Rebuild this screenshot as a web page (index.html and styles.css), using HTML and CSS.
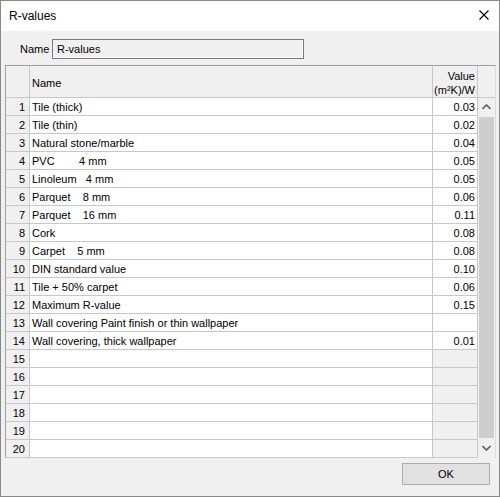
FILE: index.html
```html
<!DOCTYPE html>
<html>
<head>
<meta charset="utf-8">
<link rel="stylesheet" href="styles.css">
</head>
<body>
<div class="window">
  <div class="titlebar">
    <span class="title">R-values</span>
    <svg class="close" width="10" height="10" viewBox="0 0 10 10"><path d="M0.5 0.5 L9.5 9.5 M9.5 0.5 L0.5 9.5" stroke="#000" stroke-width="1.1" fill="none"/></svg>
  </div>
  <div class="content">
    <div class="name-row">
      <span class="label">Name</span>
      <div class="textbox">R-values</div>
    </div>
    <div class="grid">
      <div class="head">
        <div class="c num"></div>
        <div class="c name">Name</div>
        <div class="c val">Value<br>(m²K)/W</div>
        <div class="c sbhead"></div>
      </div>
      <div class="body">
        <div class="rows">
          <div class="row"><div class="c num">1</div><div class="c name">Tile (thick)</div><div class="c val">0.03</div></div>
          <div class="row"><div class="c num">2</div><div class="c name">Tile (thin)</div><div class="c val">0.02</div></div>
          <div class="row"><div class="c num">3</div><div class="c name">Natural stone/marble</div><div class="c val">0.04</div></div>
          <div class="row"><div class="c num">4</div><div class="c name">PVC        4 mm</div><div class="c val">0.05</div></div>
          <div class="row"><div class="c num">5</div><div class="c name">Linoleum   4 mm</div><div class="c val">0.05</div></div>
          <div class="row"><div class="c num">6</div><div class="c name">Parquet    8 mm</div><div class="c val">0.06</div></div>
          <div class="row"><div class="c num">7</div><div class="c name">Parquet    16 mm</div><div class="c val">0.11</div></div>
          <div class="row"><div class="c num">8</div><div class="c name">Cork</div><div class="c val">0.08</div></div>
          <div class="row"><div class="c num">9</div><div class="c name">Carpet    5 mm</div><div class="c val">0.08</div></div>
          <div class="row"><div class="c num">10</div><div class="c name">DIN standard value</div><div class="c val">0.10</div></div>
          <div class="row"><div class="c num">11</div><div class="c name">Tile + 50% carpet</div><div class="c val">0.06</div></div>
          <div class="row"><div class="c num">12</div><div class="c name">Maximum R-value</div><div class="c val">0.15</div></div>
          <div class="row"><div class="c num">13</div><div class="c name">Wall covering Paint finish or thin wallpaper</div><div class="c val"></div></div>
          <div class="row"><div class="c num">14</div><div class="c name">Wall covering, thick wallpaper</div><div class="c val">0.01</div></div>
          <div class="row"><div class="c num">15</div><div class="c name"></div><div class="c val ro"></div></div>
          <div class="row"><div class="c num">16</div><div class="c name"></div><div class="c val ro"></div></div>
          <div class="row"><div class="c num">17</div><div class="c name"></div><div class="c val ro"></div></div>
          <div class="row"><div class="c num">18</div><div class="c name"></div><div class="c val ro"></div></div>
          <div class="row"><div class="c num">19</div><div class="c name"></div><div class="c val ro"></div></div>
          <div class="row"><div class="c num">20</div><div class="c name"></div><div class="c val ro"></div></div>
        </div>
        <div class="scrollbar">
          <div class="arrow"><svg width="9" height="6" viewBox="0 0 9 6"><path d="M0.5 5 L4.5 1 L8.5 5" stroke="#606060" stroke-width="1.6" fill="none"/></svg></div>
          <div class="thumb"></div>
          <div class="arrow"><svg width="9" height="6" viewBox="0 0 9 6"><path d="M0.5 1 L4.5 5 L8.5 1" stroke="#606060" stroke-width="1.6" fill="none"/></svg></div>
        </div>
      </div>
    </div>
    <div class="footer">
      <div class="button">OK</div>
    </div>
  </div>
</div>
</body>
</html>
```

FILE: styles.css
```css
* { box-sizing: border-box; }
html, body { margin: 0; padding: 0; background: #f0f0f0; }
body {
  font-family: "Liberation Sans", Arial, sans-serif;
  font-size: 11px;
  color: #000;
}
.window {
  width: 500px;
  height: 497px;
  border: 1px solid #888888;
  background: #f0f0f0;
  display: flex;
  flex-direction: column;
}
.titlebar {
  height: 30px;
  background: #fff;
  display: flex;
  align-items: center;
  justify-content: space-between;
  padding: 0 10px 1px 8px;
  flex: none;
}
.title { font-size: 12px; }
.close { display: block; margin-top: -1px; }
.content {
  flex: 1;
  display: flex;
  flex-direction: column;
  padding: 8px 3px 0 4px;
}
.name-row {
  display: flex;
  align-items: center;
  height: 20px;
  padding-left: 15px;
}
.label { width: 32px; }
.textbox {
  width: 252px;
  height: 20px;
  border: 1px solid #7a7a7a;
  box-shadow: inset -1px -1px 0 #fff;
  background: #f0f0f0;
  padding: 2px 4px;
  line-height: 15px;
}
.grid {
  margin-top: 6px;
  width: 491px;
  height: 393px;
  border-top: 1px solid #a0a0a0;
  border-left: 1px solid #a0a0a0;
  border-right: 1px solid #dcdcdc;
  display: flex;
  flex-direction: column;
  flex: none;
}
.head {
  display: flex;
  height: 32px;
  flex: none;
  background: #f0f0f0;
}
.c {
  border-right: 1px solid #c8c8c8;
  border-bottom: 1px solid #c8c8c8;
  white-space: pre;
  overflow: hidden;
}
.num { width: 24px; text-align: right; padding-right: 4px; background: #f0f0f0; }
.name { width: 403px; padding-left: 2px; background: #fff; }
.val { width: 45px; text-align: right; padding-right: 2px; background: #fff; }
.val.ro { background: #f0f0f0; }
.head .c { background: #f0f0f0; }
.head .name { padding-top: 11px; line-height: 13px; }
.head .val { padding-top: 3px; line-height: 14px; }
.head .sbhead { flex: 1; border-right: none; }
.body { display: flex; flex: 1; }
.rows { display: flex; flex-direction: column; }
.row { display: flex; height: 18px; flex: none; }
.row .c { line-height: 18px; }
.scrollbar {
  width: 17px;
  display: flex;
  flex-direction: column;
  background: #f0f0f0;
  height: 359px;
}
.arrow {
  height: 18px;
  display: flex;
  align-items: center;
  justify-content: center;
  flex: none;
}
.thumb {
  flex: 1;
  background: #cdcdcd;
  margin: 1px 1px;
}
.footer {
  display: flex;
  justify-content: flex-end;
  padding-top: 5px;
  padding-right: 6px;
}
.button {
  width: 88px;
  height: 22px;
  background: #e1e1e1;
  border: 1px solid #adadad;
  text-align: center;
  line-height: 20px;
}
```
